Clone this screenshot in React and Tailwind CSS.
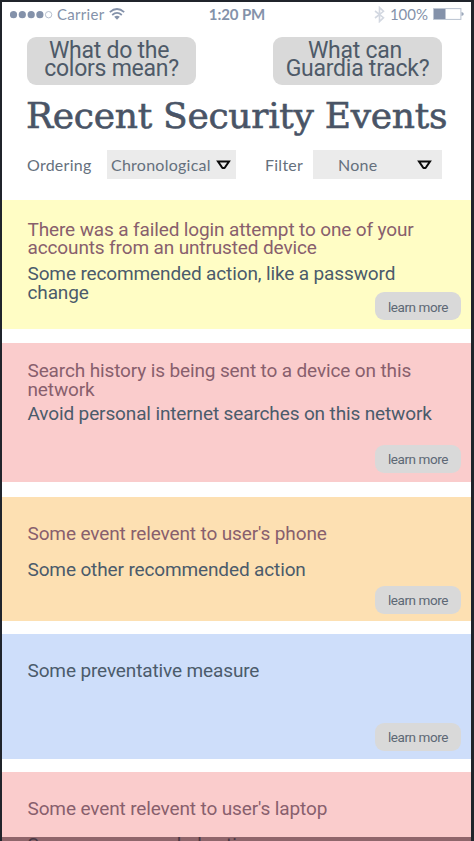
import React from "react";

function StatusBar() {
  return (
    <div className="flex h-[35px] items-start justify-between pt-[3px] pl-2 pr-[7px] font-['Lato',sans-serif] text-[15px] leading-[18px] text-[#8492aa]">
      <div className="flex w-[170px] items-center">
        <svg width="43" height="10" viewBox="0 0 43 10" fill="#8492aa">
          <circle cx="3.5" cy="5.7" r="3.6" />
          <circle cx="12.3" cy="5.7" r="3.6" />
          <circle cx="21.2" cy="5.7" r="3.6" />
          <circle cx="29.9" cy="5.7" r="3.6" />
          <circle cx="38.6" cy="5.7" r="3.2" fill="none" stroke="#a3afc2" strokeWidth="0.8" />
        </svg>
        <span className="ml-[4px] tracking-[0.3px]">Carrier</span>
        <svg className="ml-[5px]" width="16" height="12" viewBox="0 0 16 12" fill="none" stroke="#8492aa" strokeWidth="1.7">
          <path d="M.8 4.2Q8-2.2 15.2 4.2" />
          <path d="M3.2 7Q8 2.8 12.8 7" />
          <path d="M5.2 8.7Q8 6.7 10.8 8.7L8 11.7Z" fill="#8492aa" stroke="none" />
        </svg>
      </div>
      <span className="font-bold tracking-[-0.1px]">1:20 PM</span>
      <div className="flex w-[170px] items-center justify-end">
        <svg width="11" height="17" viewBox="0 0 11 17" fill="none" stroke="#d3d8e1" strokeWidth="1.6">
          <path d="M1 5L9.5 11.7L5.5 15.5V1.5L9.5 5.3L1 12" />
        </svg>
        <span className="ml-[5px]">100%</span>
        <svg className="ml-[5px]" width="31" height="12" viewBox="0 0 31 12">
          <rect x=".6" y=".6" width="27.3" height="10.8" fill="#fff" stroke="#b9c2d0" />
          <rect x="1" y="1" width="11.5" height="10" fill="#8492aa" />
          <path d="M28.5 4Q30.8 4.5 30.8 6T28.5 8Z" fill="#9ba7ba" />
        </svg>
      </div>
    </div>
  );
}

function HelpButton({ first, second }) {
  return (
    <button className="flex h-12 w-[169px] flex-col items-center rounded-[9px] bg-[#d9d9d9] pt-[5px] text-[23px] leading-[18px] tracking-[-0.25px] whitespace-nowrap text-[#4e5a68]">
      <span className="pr-[5px]">{first}</span>
      <span>{second}</span>
    </button>
  );
}

function Select({ value, wide }) {
  return (
    <div className={`flex h-[29px] w-[129px] items-center justify-between bg-[#ebebeb] ${wide ? "pl-[4px] pr-[5px]" : "pl-[25px] pr-[10px]"}`}>
      <span>{value}</span>
      <svg width="15" height="10" viewBox="0 0 15 10" fill="none" stroke="#0b0b0b" strokeWidth="2">
        <path d="M2 1.5H13L9 7.4Q7.5 8.7 6 7.4Z" />
      </svg>
    </div>
  );
}

function EventCard({ color, title, advice, button = "bottom-[9px] pt-[2px]" }) {
  return (
    <section className={`relative shrink-0 pl-[25.5px] text-[19px] leading-[18px] tracking-[-0.13px] whitespace-nowrap ${color}`}>
      <div className="text-[#885f6d]">{title}</div>
      <div className="text-[#4b5b6b]">{advice}</div>
      <button className={`absolute right-[10px] h-7 w-[86px] rounded-[9px] bg-[#d9d9d9] text-[13.5px] tracking-[-0.42px] text-[#5d6875] ${button}`}>
        learn more
      </button>
    </section>
  );
}

export default function App() {
  return (
    <div className="h-[841px] w-[474px] overflow-hidden border-t-2 border-r-[3px] border-l-2 border-[#20242b] bg-white font-['Roboto',sans-serif]">
      <StatusBar />
      <div className="flex h-12 justify-between pl-[25px] pr-[29px]">
        <HelpButton first="What do the" second="colors mean?" />
        <HelpButton first="What can" second="Guardia track?" />
      </div>
      <h1 className="h-[65px] pl-[24px] pt-[7px] font-['DejaVu_Serif',serif] text-[36px] leading-[48px] tracking-[-0.28px] whitespace-nowrap text-[#495466] [-webkit-text-stroke:0.6px_#495466]">
        Recent Security Events
      </h1>
      <div className="flex h-[29px] items-center pl-[25px] font-['Lato',sans-serif] text-base tracking-[0.25px] text-[#65707d]">
        <span className="w-20">Ordering</span>
        <Select value="Chronological" wide />
        <span className="ml-[29px] w-[48px]">Filter</span>
        <Select value="None" />
      </div>
      <main className="mt-[21px] flex flex-col">
        <EventCard
          color="h-[129px] bg-[#fffdc5] pt-[21px]"
          title={<p>There was a failed login attempt to one of your<br />accounts from an untrusted device</p>}
          advice={<p className="pt-[7px] leading-[19px]">Some recommended action, like a password<br />change</p>}
        />
        <EventCard
          color="mt-[14px] h-[139px] bg-[#facccc] pt-[18px]"
          button="bottom-[9px] pt-0"
          title={<p className="leading-[19px]">Search history is being sent to a device on this<br />network</p>}
          advice={<p className="pt-[6px]">Avoid personal internet searches on this network</p>}
        />
        <EventCard
          color="mt-[15px] h-[124px] bg-[#fde0b2] pt-[28px]"
          button="bottom-[7px] pt-0"
          title="Some event relevent to user's phone"
          advice={<p className="pt-[18px]">Some other recommended action</p>}
        />
        <EventCard
          color="mt-[13px] h-[125px] bg-[#cedefa] pt-[28px]"
          button="bottom-[8px] pt-0"
          title={<span className="text-[#4b5b6b]">Some preventative measure</span>}
        />
        <EventCard
          color="mt-[13px] h-[160px] bg-[#facccc] pt-[28px]"
          title="Some event relevent to user's laptop"
          advice={<p className="pt-[18px]">Some recommended action</p>}
        />
      </main>
      <div className="absolute top-[837px] left-[2px] h-1 w-[469px] bg-[#48202a]/60" />
    </div>
  );
}
